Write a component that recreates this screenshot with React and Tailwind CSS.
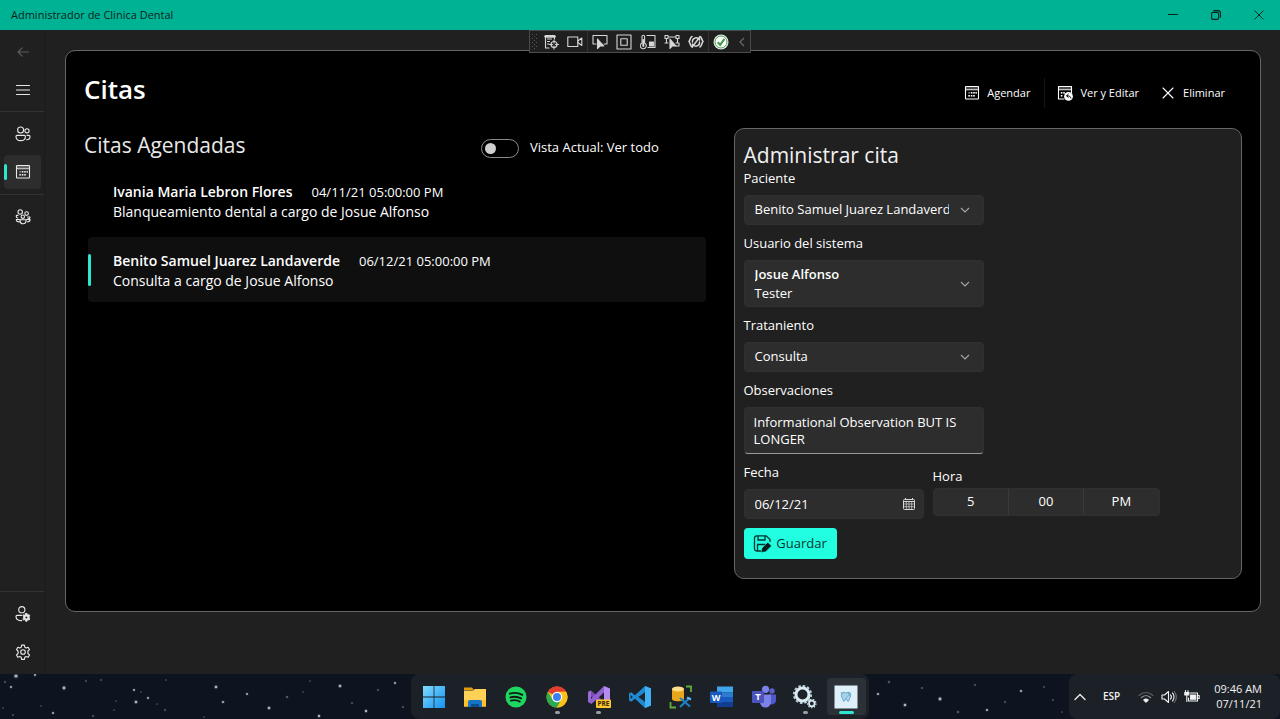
import React, { useState } from "react";

/* ---------- shared icons ---------- */

function Svg({ size = 16, box = 16, children, className = "" }) {
  return (
    <svg width={size} height={size} viewBox={`0 0 ${box} ${box}`} fill="none" stroke="currentColor" strokeWidth="1.1" strokeLinecap="round" strokeLinejoin="round" className={`shrink-0 ${className}`} aria-hidden="true">
      {children}
    </svg>
  );
}

const CalendarIcon = () => (
  <Svg>
    <rect x="1.5" y="1.5" width="13" height="12.500" rx="0.6" />
    <path d="M1.5 3h13" opacity=".6" /><path d="M1.5 4.800h13" />
    <g fill="currentColor" stroke="none">
      <rect x="6.8" y="7" width="1.6" height="1.6" /><rect x="9.200" y="7" width="1.6" height="1.6" /><rect x="11.500" y="7" width="1.400" height="1.6" />
      <rect x="4.300" y="7" width="1.6" height="1.6" opacity=".5" /><rect x="4.300" y="10" width="1.6" height="1.6" /><rect x="6.800" y="10" width="1.6" height="1.6" /><rect x="9.200" y="10" width="1.6" height="1.6" />
    </g>
  </Svg>
);

const CalendarEditIcon = () => (
  <Svg>
    <path d="M7 14H1.5V1.5h13v6" /><path d="M1.5 3h13" opacity=".6" /><path d="M1.500 4.800h13" />
    <g fill="currentColor" stroke="none">
      <rect x="3.8" y="7" width="1.6" height="1.6" /><rect x="6.200" y="7" width="1.6" height="1.6" /><rect x="3.8" y="10" width="1.6" height="1.6" />
      <circle cx="11.5" cy="11.4" r="4.4" />
    </g>
    <path d="M13.8 13c-.2-1.6-1-2.2-4-2.2m1.5-1.6-1.7 1.6 1.7 1.6" stroke="#000" strokeWidth="1" />
  </Svg>
);

const CloseIcon = ({ size = 12 }) => (
  <Svg size={size} box={12}><path d="M1 1l10 10M11 1 1 11" /></Svg>
);

const ChevronDown = () => (
  <svg width="10" height="10" viewBox="0 0 10 10" fill="none" stroke="#a8a8a8" strokeWidth="1.1" className="pointer-events-none" aria-hidden="true"><path d="M1 3l4 4 4-4" /></svg>
);

const BackIcon = () => (
  <Svg><path d="M13.500 9H3M7.200 4.800 3 9l4.200 4.200" /></Svg>
);
const MenuIcon = () => (
  <Svg><path d="M1.500 4.500h13M1.500 9h13M1.500 13.500h13" /></Svg>
);
const PeopleIcon = () => (
  <Svg>
    <circle cx="5.6" cy="4" r="3" /><circle cx="12" cy="4.8" r="2.1" />
    <path d="M2 9.4h7.4c.6 0 1 .4 1 1 0 2.600-1.600 4.200-4.700 4.200S1 13 1 10.400c0-.6.4-1 1-1zM12 9.400h2c.600 0 1 .4 1 1 0 2.200-1.300 3.300-3.400 3.300" />
  </Svg>
);
const TeamIcon = () => (
  <Svg>
    <circle cx="5.200" cy="3" r="2.200" /><circle cx="11.600" cy="4.600" r="1.800" /><circle cx="7.800" cy="7.700" r="1.700" />
    <path d="M3 6.400H2c-.5 0-.8.3-.8.800 0 .9.600 1.500 1.500 1.800M5 10.500H1.300c0 1.500 1 2.400 3 2.400M12.500 8H15c0 1.300-1 2-2.300 2M11.500 10.500h3.600c0 1.500-1 2.300-2.700 2.300M5 10.800h6.200c0 2.700-.8 4-3.100 4s-3.100-1.300-3.100-4z" />
  </Svg>
);
const GEAR = "M6.700 1.200h2.600l.4 2 1.300.75 1.900-.7 1.300 2.250-1.500 1.300v2.400l1.500 1.300-1.300 2.250-1.900-.7-1.300.75-.4 2H6.700l-.4-2L5 12.050l-1.900.7-1.300-2.250 1.500-1.300V6.800L1.800 5.500l1.300-2.250 1.900.7 1.300-.75z";
const GearIcon = () => (
  <Svg><path d={GEAR} transform="translate(-.4 -.1) scale(1.050)" /><circle cx="8" cy="8" r="2.300" /></Svg>
);
const UserGearIcon = () => (
  <Svg>
    <circle cx="6.800" cy="3.700" r="3.100" />
    <path d="M6.500 9.400H2c-.6 0-1 .4-1 1 0 2.700 2 4.200 5.800 4.200" />
    <g transform="translate(6.800 6.800) scale(.57)"><path d={GEAR} fill="currentColor" strokeWidth="1.500" /></g>
    <circle cx="11.400" cy="11.400" r="1" fill="#202020" stroke="none" />
  </Svg>
);

/* ---------- window chrome ---------- */

function TitleBar() {
  return (
    <header className="flex h-[30px] shrink-0 items-center justify-between bg-[#00b294] pl-[11px] text-[#0c1f1b]">
      <h1 className="text-[11px]">Administrador de Clinica Dental</h1>
      <div className="flex h-full">
        <button aria-label="Minimizar" className="flex w-[43px] items-center justify-center">
          <Svg size={10} box={10}><path d="M0 4.500h10" /></Svg>
        </button>
        <button aria-label="Restaurar" className="flex w-[43px] items-center justify-center">
          <Svg size={10} box={10}><rect x=".6" y="2.400" width="7" height="7" rx="1.300" /><path d="M2.800.6h4.400a2.200 2.200 0 0 1 2.200 2.200v4.400" /></Svg>
        </button>
        <button aria-label="Cerrar" className="flex w-[43px] items-center justify-center"><CloseIcon size={10} /></button>
      </div>
    </header>
  );
}

const debugTools = [
  ["Árbol visual", <><path d="M6 14H2.500V1.500h9v3.500M4.500 5h4M4.500 7.500h2M4.500 10h1.500" /><path d="M2.500 2.500h9" strokeWidth="2.500" /><circle cx="11" cy="10.500" r="3" /><path d="M11 6v3M11 12v3M6.500 10.500h3M12.500 10.500h3" /></>],
  ["Grabar", <><rect x=".8" y="3" width="10" height="9.500" /><path d="M10.800 7l4-3v7.500l-4-3" /></>],
  null,
  ["Seleccionar elemento", <><path d="M4 10H1V1.500h14V10h-3" /><path d="M5.500 5v9.500l2.500-2.500h3.800z" fill="currentColor" /></>],
  ["Adornos de diseño", <><rect x="1" y="1" width="14" height="14" /><rect x="4.800" y="4.800" width="6.400" height="6.400" /></>],
  ["Rendimiento", <><path d="M2 9V2.500a1.300 1.300 0 0 1 2.600 0V9a3 3 0 1 1-2.600 0zM7 1.500h8v12H8" /><rect x="9.500" y="8" width="4" height="4" fill="currentColor" /><path d="M3.300 6v6" strokeWidth="2" /></>],
  ["Seguir foco", <><path d="M1 1.500h3v3H1zM12 1.500h3v3h-3zM4 3h8M2.500 4.500V9M13.500 4.500V9M1 9h3M12 9h3v3h-3" /><path d="M6 5v9.500l2.300-2.500h3.700z" fill="currentColor" /></>],
  ["Recarga activa", <><path d="M4 2.500C2 3 2.500 6 1 7.500 2.500 9 2 12 4 13M12 2.500c2 .5 1.500 3.500 3 5C13.500 9 14 12 12 13" strokeWidth="1.600" /><path d="M4.500 8a3.500 3.500 0 0 1 6-3l1 1V3M11.500 8a3.500 3.500 0 0 1-6 3l-1-1v3M5 12l6-8" strokeWidth="1.400" /></>],
];

function DebugToolbar() {
  const divider = "-mx-1 h-full w-px bg-[#333]";
  return (
    <div className="absolute left-1/2 top-[30px] z-10 flex h-[23px] w-[222px] -translate-x-1/2 items-center gap-2 border border-[#4a4a4a] bg-[#1f1f1f] pl-0.5 text-[#d6d6d6]">
      <svg width="5" height="16" viewBox="0 0 5 16" fill="#555" className="-mr-0.5 shrink-0" aria-hidden="true">
        {[0, 4, 8, 12].map((y) => <path key={y} d={`M0 ${y}h1v1H0zM4 ${y}h1v1H4zM2 ${y + 2}h1v1H2z`} />)}
      </svg>
      {debugTools.map((t, i) =>
        t ? (
          <button key={i} aria-label={t[0]} className="flex h-full items-center"><Svg>{t[1]}</Svg></button>
        ) : (
          <span key={i} className={divider} />
        )
      )}
      <span className={divider} />
      <button aria-label="Estado correcto">
        <svg width="16" height="16" viewBox="0 0 16 16" aria-hidden="true">
          <circle cx="8" cy="8" r="7.500" fill="#e8f3e8" /><circle cx="8" cy="8" r="6" fill="#fff" stroke="#4f9e57" strokeWidth="1" />
          <path d="M4.700 8.300l2.500 2.600 4.200-6" fill="none" stroke="#3f9a4a" strokeWidth="2" />
        </svg>
      </button>
      <button aria-label="Contraer" className="pl-0.5"><svg width="6" height="10" viewBox="0 0 6 10" fill="none" stroke="#6a6a6a" strokeWidth="1.200" aria-hidden="true"><path d="M5 1L1 5l4 4" /></svg></button>
    </div>
  );
}

function NavButton({ label, active, dim, children }) {
  return (
    <button aria-label={label} className={`relative ml-1 mr-[3px] flex h-[34px] items-center justify-center rounded ${active ? "bg-[#2d2d2d]" : ""} ${dim ? "text-[#5c5c5c]" : "text-[#e8e8e8]"}`}>
      {active && <span className="absolute left-0 h-4 w-[3px] rounded-full bg-[#2ee6cf]" />}
      {children}
    </button>
  );
}

function Sidebar() {
  const line = <span className="my-px h-px shrink-0 bg-[#333]" />;
  return (
    <nav className="flex w-[45px] shrink-0 flex-col gap-1 border-r border-[#1b1b1b] pb-[5px] pt-1">
      <NavButton label="Atrás" dim><BackIcon /></NavButton>
      <NavButton label="Menú"><MenuIcon /></NavButton>
      {line}
      <NavButton label="Pacientes"><PeopleIcon /></NavButton>
      <NavButton label="Citas" active><CalendarIcon /></NavButton>
      {line}
      <NavButton label="Usuarios"><TeamIcon /></NavButton>
      <span className="flex-1" />
      {line}
      <NavButton label="Cuenta"><UserGearIcon /></NavButton>
      <NavButton label="Configuración"><GearIcon /></NavButton>
    </nav>
  );
}

/* ---------- page content ---------- */

const appointments = [
  { name: "Ivania Maria Lebron Flores", date: "04/11/21 05:00:00 PM", detail: "Blanqueamiento dental a cargo de Josue Alfonso" },
  { name: "Benito Samuel Juarez Landaverde", date: "06/12/21 05:00:00 PM", detail: "Consulta a cargo de Josue Alfonso" },
];

function AppointmentList() {
  const [selected, setSelected] = useState(1);
  return (
    <section>
      <div className="flex h-10 items-center">
        <h3 className="w-[397px] pb-1.5 text-[21px] leading-7 text-[#e8e8e8]">Citas Agendadas</h3>
        <input id="vista" type="checkbox" role="switch" className="h-[19px] w-[38px] shrink-0 appearance-none rounded-full border border-[#8a8a8a] before:ml-[3px] before:mt-[3px] before:block before:size-[11px] before:rounded-full before:bg-[#cfcfcf] before:transition checked:before:translate-x-5" />
        <label htmlFor="vista" className="ml-[11px] text-[13px]">Vista Actual: Ver todo</label>
      </div>
      <ul className="flex flex-col gap-1 pl-1">
        {appointments.map((a, i) => (
          <li key={a.name}>
            <button onClick={() => setSelected(i)} className={`flex h-[65px] w-full items-center gap-[22px] rounded text-left ${selected === i ? "bg-[#0f0f0f]" : ""}`}>
              <span className={`h-8 w-[3px] rounded-full ${selected === i ? "bg-[#2ee6cf]" : ""}`} />
              <span className="pt-0.5">
                <span className="flex items-center gap-[19px] leading-5">
                  <strong className="text-[14px] font-semibold">{a.name}</strong>
                  <span className="text-[13px]">{a.date}</span>
                </span>
                <span className="block text-[14px] leading-5">{a.detail}</span>
              </span>
            </button>
          </li>
        ))}
      </ul>
    </section>
  );
}

const fieldBox = "w-full rounded border border-[#303030] bg-[#2d2d2d] outline-none";

function Field({ id, label, children }) {
  return (
    <div className="w-[240px]">
      <label htmlFor={id} className="mb-[7px] block h-5 leading-5">{label}</label>
      {children}
    </div>
  );
}

function SelectBox({ id, value, className, sub }) {
  return (
    <div className="relative flex items-center">
      <select id={id} className={`${fieldBox} appearance-none pl-2.5 pr-[34px] ${className}`}>
        <option>{value}</option>
      </select>
      {sub && <span className="pointer-events-none absolute bottom-1 left-[11px] leading-5">{sub}</span>}
      <span className="pointer-events-none absolute right-3.5"><ChevronDown /></span>
    </div>
  );
}

function AppointmentForm() {
  return (
    <form onSubmit={(e) => e.preventDefault()} className="rounded-[10px] border border-[#666] bg-[#202020] px-[9px] pb-[19px] pt-3 text-[13px]">
      <h3 className="h-[27px] text-[21px] leading-7 text-[#f0f0f0]">Administrar cita</h3>
      <div className="flex flex-col gap-2">
        <Field id="paciente" label="Paciente">
          <SelectBox id="paciente" value="Benito Samuel Juarez Landaverde" className="h-[30px]" />
        </Field>
        <Field id="usuario" label="Usuario del sistema">
          <SelectBox id="usuario" value="Josue Alfonso" sub="Tester" className="h-[47px] pb-[18px] font-semibold" />
        </Field>
        <Field id="tratamiento" label="Trataniento">
          <SelectBox id="tratamiento" value="Consulta" className="h-[30px]" />
        </Field>
        <Field id="observaciones" label="Observaciones">
          <textarea id="observaciones" rows={2} defaultValue="Informational Observation BUT IS LONGER" className={`${fieldBox} block h-[47px] resize-none overflow-hidden border-b-[#9a9a9a] px-[9px] pt-1.5 leading-[17px]`} />
        </Field>
        <div className="flex items-start gap-[9px]">
          <div className="w-[180px]">
            <label htmlFor="fecha" className="mb-[7px] block h-5 leading-5">Fecha</label>
            <div className="relative flex items-center">
              <input id="fecha" type="text" defaultValue="06/12/21" className={`${fieldBox} h-[30px] px-2.5`} />
              <button type="button" aria-label="Abrir calendario" className="absolute right-2 text-[#d8d8d8]">
                <svg width="14" height="14" viewBox="0 0 14 14" fill="none" stroke="currentColor" aria-hidden="true">
                  <rect x="1.500" y="2.500" width="11" height="10" rx="1" /><path d="M1.500 4.500h11M3.500 1v2M10.500 1v2" /><path d="M1.500 7h11M1.500 9.700h11M4.300 5v7.500M7 5v7.500M9.700 5v7.500" strokeWidth=".7" />
                </svg>
              </button>
            </div>
          </div>
          <div className="w-[227px] pt-1">
            <label htmlFor="hora" className="mb-0.5 block h-5 leading-5">Hora</label>
            <div className="flex h-7 divide-x divide-[#3a3a3a] overflow-hidden rounded border border-[#303030] bg-[#2d2d2d]">
              <select id="hora" className="min-w-0 flex-1 appearance-none text-center [text-align-last:center]"><option>5</option></select>
              <select aria-label="Minutos" className="min-w-0 flex-1 appearance-none text-center [text-align-last:center]"><option>00</option></select>
              <select aria-label="Periodo" className="min-w-0 flex-1 appearance-none text-center [text-align-last:center]"><option>PM</option></select>
            </div>
          </div>
        </div>
      </div>
      <button type="submit" className="mt-[9px] flex h-[31px] w-[93px] items-center justify-center gap-1 rounded bg-[#22ffe0] text-[#06342e]">
        <svg width="19" height="19" viewBox="0 0 19 19" fill="none" stroke="currentColor" strokeWidth="1.300" aria-hidden="true">
          <path d="M8 17H3.500A2 2 0 0 1 1.500 15V4A2.200 2.200 0 0 1 3.700 1.800h9.500L17 5.500V8" /><path d="M5 2v4h7V2M4.500 17v-6.500h8" />
          <path d="M8 18.500l1-4.500 5.800-5.800 3.700 3.700-5.800 5.800z" fill="#031e1a" stroke="#22ffe0" strokeWidth=".5" />
        </svg>
        Guardar
      </button>
    </form>
  );
}

function CommandBar() {
  return (
    <div className="flex items-center pr-[17px] pt-0.5 text-[11px]">
      <button className="flex h-[30px] items-center gap-[7px] pr-3.5"><CalendarIcon />Agendar</button>
      <span className="h-[30px] w-px bg-[#161616]" />
      <button className="flex h-[30px] items-center gap-[7px] pl-3 pr-[11px]"><CalendarEditIcon />Ver y Editar</button>
      <button className="flex h-[30px] items-center gap-[9px] pl-3"><CloseIcon />Eliminar</button>
    </div>
  );
}

/* ---------- taskbar ---------- */

const stars = [
  [16, 2, 1.6], [35, 1, 1], [5, 8, 0.8], [11, 13, 1], [64, 14, 1.4], [86, 7, 0.7], [101, 6, 0.7], [134, 16, 1], [136, 28, 1.3], [141, 18, 0.6],
  [148, 24, 1], [41, 32, 0.6], [53, 39, 1], [93, 42, 0.8], [13, 41, 0.7], [3, 34, 0.6], [116, 27, 0.6], [114, 36, 0.6], [157, 30, 0.6], [165, 36, 0.8],
  [166, 6, 0.6], [216, 13, 1.3], [223, 28, 1.1], [247, 20, 1], [269, 34, 1.3], [287, 23, 0.9], [303, 18, 0.6], [310, 7, 0.6], [204, 43, 0.6], [319, 42, 1.2],
  [340, 12, 1.3], [352, 29, 0.8], [366, 37, 1.2], [378, 16, 0.8], [395, 9, 1], [403, 33, 0.8], [878, 20, 1.1], [889, 8, 0.9], [905, 31, 1.3], [922, 14, 0.8],
  [940, 25, 1.4], [958, 38, 0.9], [975, 11, 0.8], [987, 36, 1.1], [1005, 28, 0.8], [1021, 17, 1.1], [1044, 13, 0.7], [1053, 26, 0.7], [1062, 38, 0.6],
];

const taskApps = [
  ["Inicio", <><defs><linearGradient id="win" x1="0" y1="0" x2="1" y2="1"><stop offset="0" stopColor="#7fdcff" /><stop offset="1" stopColor="#1492f0" /></linearGradient></defs><path fill="url(#win)" d="M1 1h10.600v10.600H1zM12.400 1H23v10.600H12.400zM1 12.400h10.600V23H1zM12.400 12.400H23V23H12.400z" /></>],
  ["Explorador", <><path fill="#e29b0c" d="M1 2.500h8l2 2.500H1z" /><path fill="#ffd257" d="M1 5.500h9l2-1.500h11v17.500H1z" /><path fill="#ffc02e" d="M1 15h22v6.500H1z" /><path fill="#1674c4" d="M5 22v-5a2 2 0 0 1 2-2h10a2 2 0 0 1 2 2v5z" /><path fill="#0b4f8d" d="M8 19h8v3H8z" /></>],
  ["Spotify", <><circle cx="12" cy="12" r="10.500" fill="#1ed760" /><path d="M5.800 8.700c4-1.200 9-.8 12.500 1.200M6.300 12.300c3.600-1 7.700-.6 10.800 1.100M6.800 15.600c3-.8 6.300-.5 9 1" fill="none" stroke="#101a14" strokeWidth="1.900" strokeLinecap="round" /></>],
  ["Chrome", <><circle cx="12" cy="12" r="10.500" fill="#fbc116" /><path fill="#e33b2e" d="M12 12L2.900 6.750A10.500 10.500 0 0 1 21.100 6.750H12z" /><path fill="#2da94f" d="M12 22.500A10.500 10.500 0 0 1 2.900 6.750L7.500 14.600 12 17.250 16.500 14.600z" /><path fill="#fbc116" d="M21.100 6.750A10.500 10.500 0 0 1 12 22.500l4.500-7.900L16 6.750z" /><circle cx="12" cy="12" r="5.200" fill="#fff" /><circle cx="12" cy="12" r="4" fill="#3c7fef" /></>, "dot"],
  ["Visual Studio", <><path fill="#7b4bb8" d="M1 7l3-1.500L20 19l-3 3.500L1 9z" /><path fill="#9a6bd6" d="M1 17V7l3-1.500v12z" /><path fill="#b48cf0" d="M17 1l6 2.500v17L17 23z" /><path fill="#9061cf" d="M17 1v6.500L4.500 19 1 17z" /><rect x="9" y="14.500" width="15" height="8.500" rx="1" fill="#ffc830" /><text x="16.500" y="21.300" textAnchor="middle" fontSize="6.500" fontWeight="700" fill="#332400">PRE</text></>, "dot"],
  ["VS Code", <><path fill="#1f8ad2" d="M17 1L7 10.200 3.200 7.300 1 8.500v7l2.200 1.200L7 13.800 17 23l6-2.500v-17z" /><path fill="#20242b" d="M17 7v10l-6.600-5zM2.700 10v4l2-2z" /><path fill="#41b1f5" d="M17 1l6 2.500v17L17 23z" /></>],
  ["Datos", <><path fill="#e9a61b" d="M3 4v10c0 3 12 3 12 0V4z" /><ellipse cx="9" cy="4" rx="6" ry="2.500" fill="#ffdf8a" /><path d="M17 1.500h5V7M1.500 17v5.500H7" fill="none" stroke="#5fae3a" strokeWidth="1.800" /><path d="M11 13l10 8.500M21 12.500L11 22" stroke="#1d7fc0" strokeWidth="2.200" /><path d="M18 12.500l4 2" stroke="#63b5ea" strokeWidth="2" /></>],
  ["Word", <><path fill="#41a5ee" d="M7 1.500h16v6H7z" /><path fill="#2b7cd3" d="M7 7.500h16V12H7z" /><path fill="#185abd" d="M7 12h16v5H7z" /><path fill="#103f91" d="M7 17h16v5H7z" /><rect x="0" y="6.500" width="12" height="11.500" rx="1" fill="#185abd" /><text x="6" y="15.600" textAnchor="middle" fontSize="9" fontWeight="700" fill="#fff">W</text></>],
  ["Teams", <><circle cx="20" cy="6" r="2.700" fill="#5b5fc7" /><circle cx="13.500" cy="4.300" r="3.600" fill="#7b83eb" /><path fill="#5059c9" d="M17 9.500h7v6.500a4 4 0 0 1-7 2z" /><path fill="#7b83eb" d="M8 9.500h11V17a5.500 5.500 0 0 1-11 0z" /><rect x="0" y="6" width="12" height="12" rx="1" fill="#4b53bc" /><text x="6" y="15.400" textAnchor="middle" fontSize="9.500" fontWeight="700" fill="#fff">T</text></>],
  ["Servicios", <><circle cx="9.500" cy="9.500" r="6.500" fill="none" stroke="#dcebf2" strokeWidth="3" /><circle cx="9.500" cy="9.500" r="8.600" fill="none" stroke="#b9d3de" strokeWidth="2" strokeDasharray="2.500 2" /><circle cx="18.800" cy="18.500" r="2.800" fill="#20242b" stroke="#dcebf2" strokeWidth="1.800" /><circle cx="18.800" cy="18.500" r="4.200" fill="none" stroke="#b9d3de" strokeWidth="1.300" strokeDasharray="1.500 1.400" /></>, "dot"],
  ["Clinica Dental", <><path fill="#dff0fa" d="M.5.500h23v23H.5z" /><path d="M8 8c1.300-1.500 2.700 0 4 0s2.700-1.500 4 0c1.200 1.500.5 4-.4 5.300-.6 1.500-.8 3.200-1.500 3.200-.9 0-.9-2.700-2.100-2.700s-1.200 2.700-2.100 2.700c-.8 0-.9-1.700-1.500-3.200C7.500 12 6.800 9.500 8 8z" fill="#a9d5ec" stroke="#5a9fc6" strokeWidth=".9" /><path d="M6.500 7l2.500 2.500M17 7.500l-6 6.500M14 7l2 4" stroke="#5a97bb" strokeWidth=".6" /></>, "active"],
];

function Taskbar() {
  return (
    <footer className="relative grid h-[45px] shrink-0 grid-cols-[1fr_auto_1fr] overflow-hidden bg-[#0d131f]">
      <svg className="absolute inset-0 h-full w-full" aria-hidden="true">
        {stars.map(([x, y, r], i) => (
          <g key={i} fill="#d5e4f2"><circle cx={x} cy={y} r={r * 1.700} opacity=".15" /><circle cx={x} cy={y} r={r} opacity={r > 0.9 ? 0.75 : 0.3} /></g>
        ))}
      </svg>
      <span />
      <div className="relative flex w-[458px] rounded-lg bg-[#1c2027] px-0.5">
        {taskApps.map(([name, art, state]) => (
          <button key={name} aria-label={name} className="relative flex flex-1 items-center justify-center">
            {state === "active" && <span className="absolute inset-x-px bottom-1 top-1 rounded bg-[#2c3037]" />}
            <svg width="24" height="24" viewBox="0 0 24 24" className="relative" aria-hidden="true">{art}</svg>
            {state === "dot" && <span className="absolute bottom-[5px] h-[3px] w-[5px] rounded-full bg-[#9a9da1]" />}
            {state === "active" && <span className="absolute bottom-[5px] h-[3px] w-[15px] rounded-full bg-[#2ee6cf]" />}
          </button>
        ))}
      </div>
      <div className="relative flex items-center justify-self-end rounded-lg bg-[#1c2027] pl-[5px] pr-[18px] text-[11px] text-[#f2f2f2]">
        <button aria-label="Iconos ocultos" className="mr-[17px]"><Svg size={12} box={12}><path d="M1 8.500l5-5 5 5" strokeWidth="1.300" /></Svg></button>
        <button className="mr-[18px] text-[10px] font-semibold">ESP</button>
        <button aria-label="Red, sonido y batería" className="mr-3.5 flex items-center gap-[7px]">
          <Svg>
            <path d="M1 6.500c4-4 10-4 14 0" opacity=".3" /><path d="M3.300 8.700c2.800-2.600 6.600-2.600 9.400 0" opacity=".6" /><path d="M5.800 11a3.200 3.200 0 0 1 4.400 0L8 13.200z" fill="currentColor" />
          </Svg>
          <Svg><path d="M1 6v4h2.500L7.500 13.500v-11L3.500 6z" /><path d="M9.500 5.800c1 1.200 1 3.200 0 4.400M11.500 4c2 2 2 6 0 8" /><path d="M13.300 2.500c2.700 3 2.700 8 0 11" opacity=".4" /></Svg>
          <Svg><path d="M6 4h7.500v8h-9V9M14 6.500h1.200v3H14" /><path d="M6.500 6h5.300v4.200H6.500z" fill="currentColor" /><path d="M1.500 1.500v2M4 1.500v2M.8 3.500h4V6h-4zM2.800 6v6.500" fill="currentColor" /></Svg>
        </button>
        <time dateTime="2021-11-07T09:46" className="pb-0.5 text-right leading-[15px]">09:46 AM<br />07/11/21</time>
      </div>
    </footer>
  );
}

export default function App() {
  return (
    <div className="relative flex min-h-screen flex-col bg-[#202020] font-['Open_Sans','Noto_Sans',sans-serif] text-white">
      <TitleBar />
      <DebugToolbar />
      <div className="flex flex-1">
        <Sidebar />
        <main className="flex min-w-0 flex-1 flex-col pb-[62px] pl-5 pr-[19px] pt-5">
          <section className="flex-1 rounded-[10px] border border-[#666] bg-black px-[18px] pb-8 pt-4">
            <div className="mb-[11px] flex h-[50px] items-center justify-between">
              <h2 className="pb-1.5 text-[26px] font-semibold">Citas</h2>
              <CommandBar />
            </div>
            <div className="grid grid-cols-[minmax(0,55fr)_minmax(0,45fr)] gap-7">
              <AppointmentList />
              <AppointmentForm />
            </div>
          </section>
        </main>
      </div>
      <Taskbar />
    </div>
  );
}
